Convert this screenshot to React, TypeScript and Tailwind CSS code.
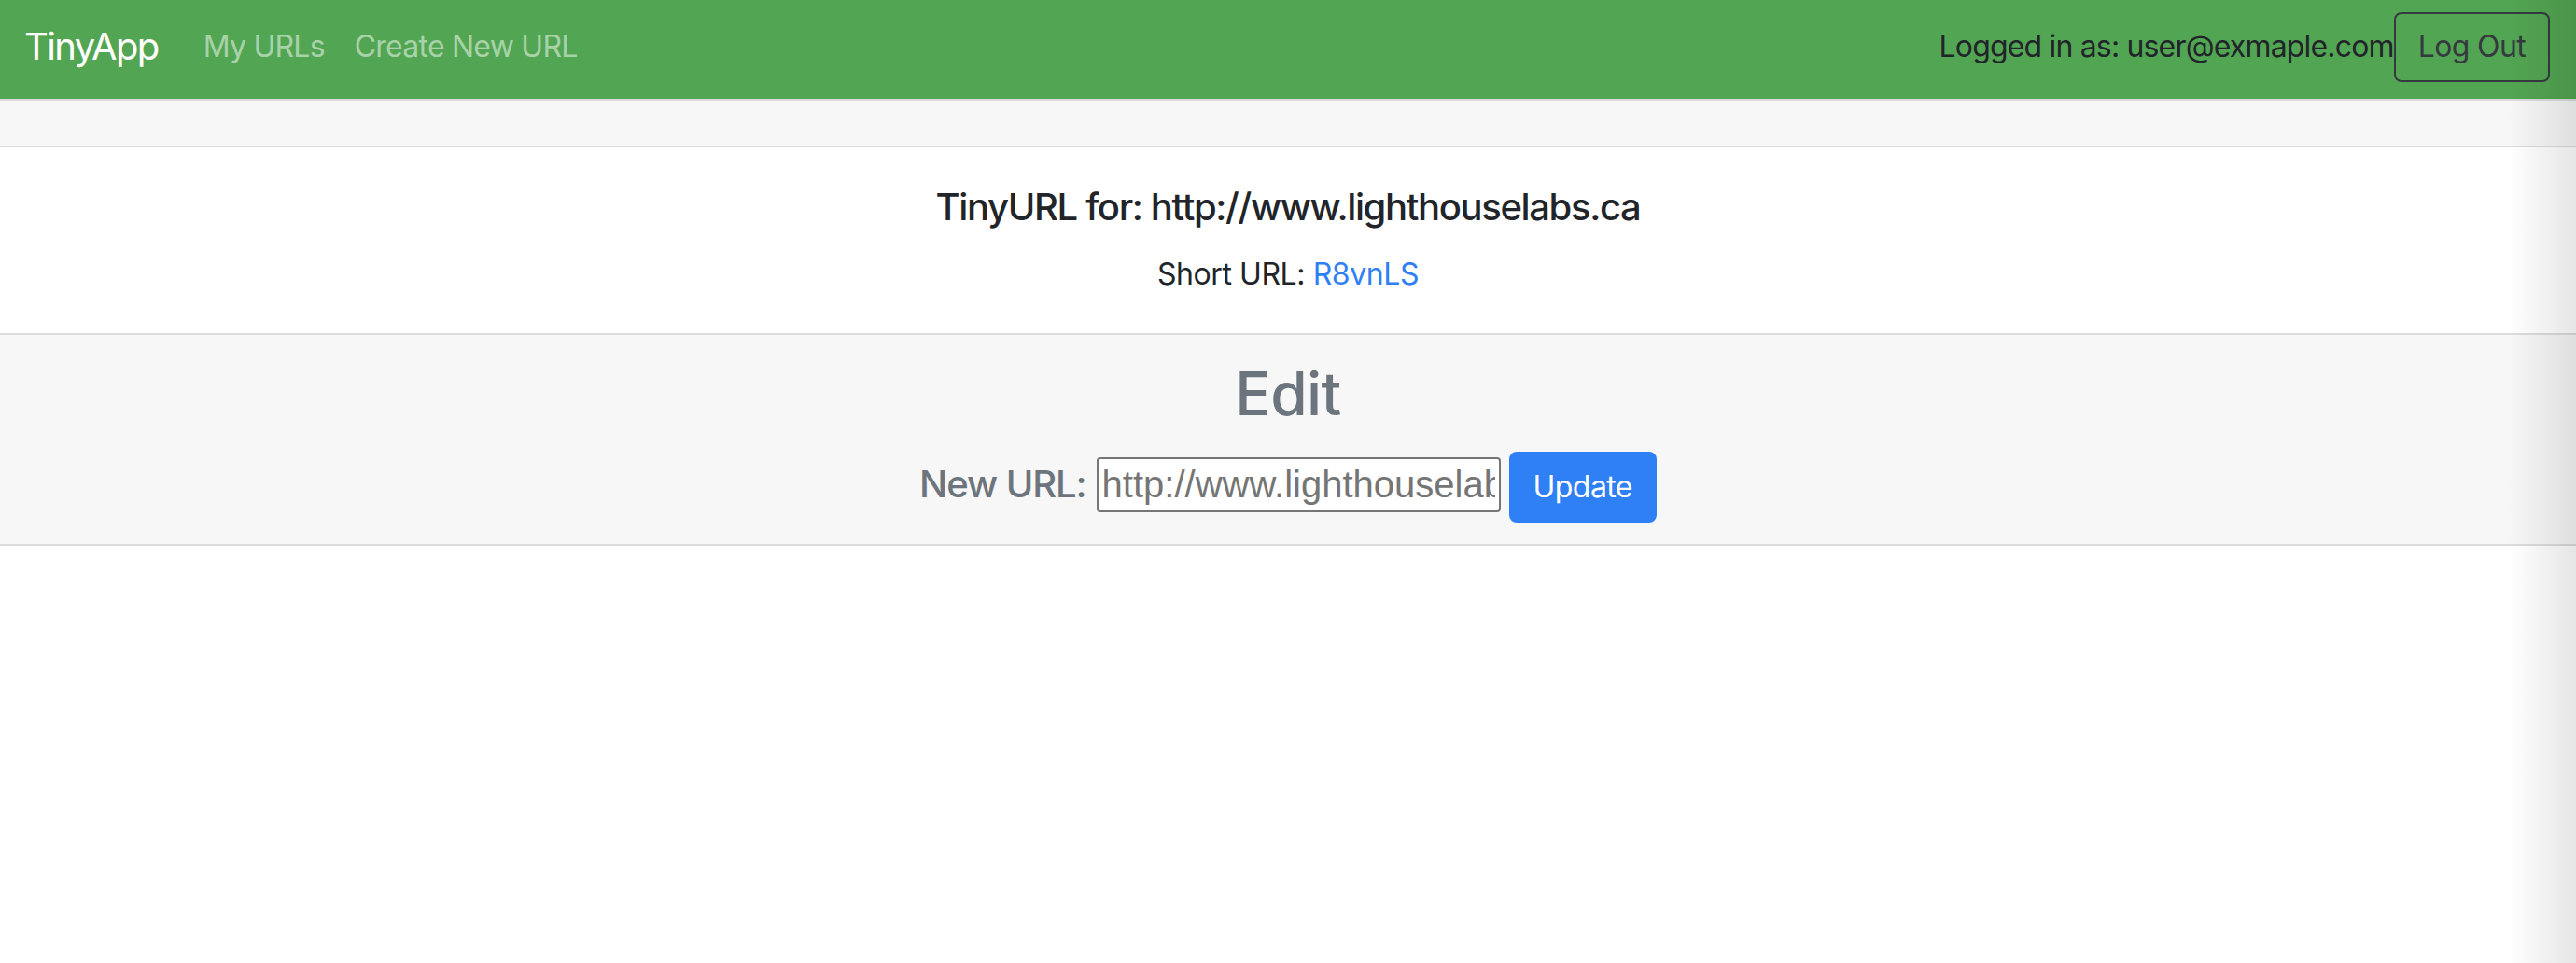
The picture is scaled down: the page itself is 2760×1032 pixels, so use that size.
import React from "react";

export default function App() {
  return (
    <div className="relative min-h-[1032px] w-full overflow-hidden bg-white font-['Inter',sans-serif] text-[#212529]">
      <nav className="flex h-[106px] items-center bg-[#52a552] pb-[6px] pl-[26px] pr-[28px]">
        <span className="mr-[32px] text-[40px] leading-[60px] tracking-[-0.04em] text-white">TinyApp</span>
        <a className="px-[16px] text-[32px] leading-[48px] tracking-[-0.024em] text-white/50">My URLs</a>
        <a className="px-[16px] text-[32px] leading-[48px] tracking-[-0.024em] text-white/50">Create New URL</a>
        <div className="ml-auto flex items-center">
          <span className="text-[32px] leading-[48px] tracking-[-0.026em] text-[#212529]">Logged in as: user@exmaple.com</span>
          <button className="h-[75px] rounded-[8px] border-2 border-[#343a40] px-[24px] text-[32px] leading-[48px] tracking-[-0.02em] text-[#343a40]">
            Log Out
          </button>
        </div>
      </nav>

      <div className="w-full">
        <div className="h-[52px] border-y-2 border-[#dcdcdc] bg-[#f7f7f7]" />
        <div className="flex flex-col items-center px-[40px] pt-[40px] pb-[39px]">
          <h5 className="mb-[24px] text-[40px] font-medium leading-[48px] tracking-[-0.034em] text-[#212529]">
            TinyURL for: http://www.lighthouselabs.ca
          </h5>
          <p className="text-[32px] leading-[48px] tracking-[-0.013em] text-[#212529]">
            Short URL: <a className="text-[#2f7ff5]">R8vnLS</a>
          </p>
        </div>
        <div className="flex flex-col items-center border-y-2 border-[#dcdcdc] bg-[#f7f7f7] px-[40px] pt-[24px] pb-[23px]">
          <h2 className="mb-[16px] text-[64px] font-medium leading-[77px] tracking-[-0.01em] text-[#6c757d]">Edit</h2>
          <form className="flex items-baseline justify-center pt-[8px]" onSubmit={(e) => e.preventDefault()}>
            <label className="mr-[11px] text-[40px] font-medium leading-[48px] tracking-[-0.027em] text-[#6c757d]">New URL:</label>
            <input
              type="text"
              placeholder="http://www.lighthouselabs.ca"
              className="h-[59px] w-[433px] rounded-[4px] border-2 border-[#767676] bg-white px-[4px] font-['Liberation_Sans',Arial,sans-serif] text-[40px] text-[#757575] placeholder:text-[#757575]"
            />
            <button className="ml-[9px] h-[76px] rounded-[8px] border-2 border-[#2f7ff5] bg-[#2f7ff5] px-[24px] text-[32px] leading-[48px] tracking-[-0.018em] text-white">
              Update
            </button>
          </form>
        </div>
      </div>

      <div className="pointer-events-none absolute right-0 top-0 h-full w-[72px] bg-gradient-to-r from-transparent to-black/[0.1]" />
    </div>
  );
}
